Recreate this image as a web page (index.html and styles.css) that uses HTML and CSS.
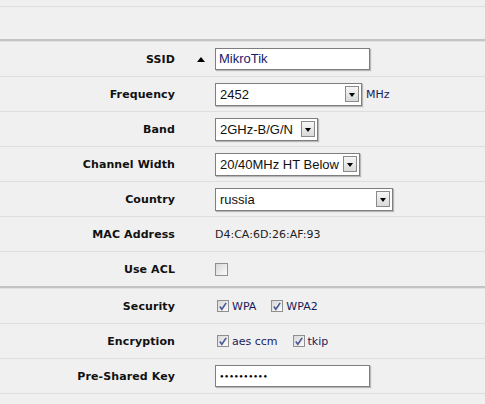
FILE: index.html
```html
<!DOCTYPE html>
<html>
<head>
<meta charset="utf-8">
<link rel="stylesheet" href="styles.css">
</head>
<body>
<div class="top1"></div>
<div class="top2"></div>
<div class="divider"></div>

<div class="row">
  <div class="label">SSID</div>
  <div class="mid"><span class="tri"></span></div>
  <div class="ctrl"><div class="input w154">MikroTik</div></div>
</div>
<div class="row">
  <div class="label">Frequency</div>
  <div class="mid"></div>
  <div class="ctrl"><div class="select w147"><span class="sval">2452</span><span class="btn"><span class="arr"></span></span></div><span class="unit">MHz</span></div>
</div>
<div class="row">
  <div class="label">Band</div>
  <div class="mid"></div>
  <div class="ctrl"><div class="select w103"><span class="sval">2GHz-B/G/N</span><span class="btn"><span class="arr"></span></span></div></div>
</div>
<div class="row">
  <div class="label">Channel Width</div>
  <div class="mid"></div>
  <div class="ctrl"><div class="select w145"><span class="sval">20/40MHz HT Below</span><span class="btn"><span class="arr"></span></span></div></div>
</div>
<div class="row">
  <div class="label">Country</div>
  <div class="mid"></div>
  <div class="ctrl"><div class="select w178"><span class="sval">russia</span><span class="btn"><span class="arr"></span></span></div></div>
</div>
<div class="row">
  <div class="label">MAC Address</div>
  <div class="mid"></div>
  <div class="ctrl"><span class="text">D4:CA:6D:26:AF:93</span></div>
</div>
<div class="row last">
  <div class="label">Use ACL</div>
  <div class="mid"></div>
  <div class="ctrl"><span class="cb"></span></div>
</div>
<div class="divider"></div>
<div class="row">
  <div class="label">Security</div>
  <div class="mid"></div>
  <div class="ctrl">
    <label class="opt"><span class="cb on"><svg viewBox="0 0 11 11" width="11" height="11"><path d="M2 5.5 L4.2 8.5 L9 1.5" fill="none" stroke="#4b5c94" stroke-width="1.8"/></svg></span><span class="otext">WPA</span></label>
    <label class="opt"><span class="cb on"><svg viewBox="0 0 11 11" width="11" height="11"><path d="M2 5.5 L4.2 8.5 L9 1.5" fill="none" stroke="#4b5c94" stroke-width="1.8"/></svg></span><span class="otext">WPA2</span></label>
  </div>
</div>
<div class="row">
  <div class="label">Encryption</div>
  <div class="mid"></div>
  <div class="ctrl">
    <label class="opt"><span class="cb on"><svg viewBox="0 0 11 11" width="11" height="11"><path d="M2 5.5 L4.2 8.5 L9 1.5" fill="none" stroke="#4b5c94" stroke-width="1.8"/></svg></span><span class="otext">aes ccm</span></label>
    <label class="opt"><span class="cb on"><svg viewBox="0 0 11 11" width="11" height="11"><path d="M2 5.5 L4.2 8.5 L9 1.5" fill="none" stroke="#4b5c94" stroke-width="1.8"/></svg></span><span class="otext">tkip</span></label>
  </div>
</div>
<div class="row">
  <div class="label">Pre-Shared Key</div>
  <div class="mid"></div>
  <div class="ctrl"><div class="input w155 pw">●●●●●●●●●●</div></div>
</div>
</body>
</html>
```
FILE: styles.css
```css
html, body {
  margin: 0;
  padding: 0;
  background: #f0f0f0;
  width: 485px;
  height: 404px;
  overflow: hidden;
}
body {
  font-family: "DejaVu Sans", Verdana, sans-serif;
  font-size: 11px;
  color: #111;
}
.top1 {
  height: 6px;
  border-bottom: 1px solid #dedede;
}
.top2 {
  height: 32px;
}
.divider {
  height: 1px;
  border-top: 2px solid #c4c4c4;
  background: #f0f0f0;
  border-bottom: 1px solid #e2e2e2;
  box-sizing: content-box;
  height: 0;
}
.row {
  display: grid;
  grid-template-columns: 175px 40px 1fr;
  align-items: center;
  height: 34px;
  border-bottom: 1px solid #dedede;
}
.row.last {
  border-bottom: none;
}
.label {
  text-align: right;
  font-weight: bold;
  font-size: 11px;
  color: #111;
  letter-spacing: 0.1px;
}
.mid {
  display: flex;
  align-items: center;
  justify-content: flex-start;
  padding-left: 22px;
}
.tri {
  width: 0;
  height: 0;
  border-left: 4px solid transparent;
  border-right: 4px solid transparent;
  border-bottom: 5px solid #000;
}
.ctrl {
  display: flex;
  align-items: center;
}
.input {
  box-sizing: border-box;
  height: 22px;
  background: #fff;
  border: 1px solid #7e7e7e;
  box-shadow: 1px 1px 1px #b8b8b8;
  font-family: "Liberation Sans", Arial, sans-serif;
  font-size: 13px;
  color: #1a1a6a;
  padding: 0 3px;
  line-height: 20px;
}
.w154 { width: 155px; }
.w155 { width: 155px; }
.pw {
  font-size: 6px;
  letter-spacing: 1.2px;
  color: #000;
  padding-left: 4px;
}
.select {
  box-sizing: border-box;
  height: 23px;
  background: #fff;
  border: 1px solid #7e7e7e;
  box-shadow: 1px 1px 1px #b8b8b8;
  display: flex;
  align-items: center;
  justify-content: space-between;
  padding: 0 2px 0 4px;
  font-family: "Liberation Sans", Arial, sans-serif;
  font-size: 13px;
  color: #111;
}
.w147 { width: 147px; }
.w103 { width: 103px; }
.w145 { width: 145px; }
.w178 { width: 178px; }
.sval {
  white-space: nowrap;
}
.btn {
  box-sizing: border-box;
  width: 14px;
  height: 16px;
  border: 1px solid #8a8a8a;
  background: linear-gradient(#f6f6f6, #dadada);
  display: flex;
  align-items: center;
  justify-content: center;
  flex: none;
  margin-left: 2px;
}
.arr {
  width: 0;
  height: 0;
  border-left: 3.5px solid transparent;
  border-right: 3.5px solid transparent;
  border-top: 4px solid #000;
  margin-top: 1px;
}
.unit {
  margin-left: 4px;
  font-size: 11px;
  color: #1a1a5a;
}
.text {
  font-size: 11px;
  color: #222;
}
.cb {
  box-sizing: border-box;
  width: 13px;
  height: 13px;
  border: 1px solid #8f8f8f;
  background: linear-gradient(135deg, #d8d8d8, #fbfbfb);
  display: inline-flex;
  align-items: center;
  justify-content: center;
}
.opt {
  display: inline-flex;
  align-items: center;
  margin-left: 2px;
  margin-right: 13px;
}
.opt .cb {
  width: 12px;
  height: 12px;
}
.otext {
  margin-left: 3px;
  font-size: 11px;
  color: #1a1a5a;
}
```
